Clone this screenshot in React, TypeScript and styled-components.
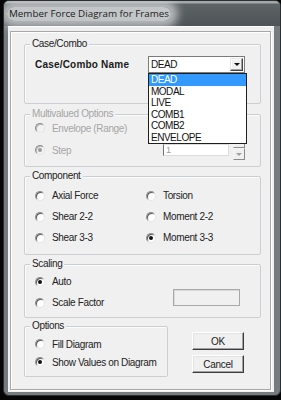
import React from 'react'
import styled, { createGlobalStyle } from 'styled-components'

const GlobalStyle = createGlobalStyle`
  html, body {
    margin: 0;
    padding: 0;
    background: #060606;
    overflow: hidden;
  }
  body {
    width: 281px;
    height: 400px;
    font-family: "Liberation Sans", Arial, sans-serif;
  }
`

const Window = styled.div`
  margin-left: 3px;
  width: 278px;
  height: 396px;
  box-sizing: border-box;
  background: #767b7f;
  border: 1px solid #2c2f32;
  border-radius: 6px;
  display: flex;
  flex-direction: column;
  overflow: hidden;
`

const TitleBar = styled.div`
  height: 25px;
  flex: none;
  display: flex;
  align-items: center;
  padding-left: 3px;
  background: linear-gradient(#a3a8ab 0, #a3a8ab 2px, #5e6366 3px, #4e5357 100%);
`

const TitleText = styled.span`
  font-family: "Open Sans", "Noto Sans", sans-serif;
  font-size: 9.8px;
  line-height: 14px;
  color: #1c1c1c;
  padding: 0 2px;
  background: rgba(206, 209, 211, 0.9);
  border-radius: 10px;
  box-shadow: 0 0 9px 7px rgba(206, 209, 211, 0.8);
`

const Client = styled.div`
  flex: 1;
  margin: 0 6px 3px 4px;
  background: #f0f0f0;
  border-top: 1px solid #ffffff;
  padding: 4px 3px 2px 2px;
  display: flex;
  flex-direction: column;
`

const Panel = styled.div`
  flex: 1;
  border: 1px solid #a7a7a7;
  box-shadow: inset 1px 1px 0 #ffffff, 1px 1px 0 #ffffff;
  padding: 12px 9px 0 13px;
`

const Group = styled.div<{ $h: number; $mt?: number; $w?: number }>`
  box-sizing: border-box;
  height: ${p => p.$h}px;
  width: ${p => (p.$w ? `${p.$w}px` : 'auto')};
  margin-top: ${p => p.$mt ?? 0}px;
  padding: 0 15px 0 10px;
  border: 1px solid #cbcfd2;
  border-radius: 2px;
  box-shadow: inset 1px 1px 0 #fbfbfb;
`

/* sits on the group's top border; $gap is the space below the border to the first row */
const Legend = styled.div<{ $off?: boolean; $gap: number }>`
  width: fit-content;
  margin: -7px 0 ${p => p.$gap - 5}px -5px;
  padding: 0 2px;
  background: #f0f0f0;
  font-size: 10px;
  letter-spacing: -0.35px;
  line-height: 12px;
  color: ${p => (p.$off ? '#a6a6a6' : '#222')};
`

const Text = styled.span<{ $off?: boolean }>`
  font-size: 10px;
  letter-spacing: -0.35px;
  color: ${p => (p.$off ? '#a6a6a6' : '#222')};
  white-space: nowrap;
`

const Radio = styled.span<{ $on?: boolean; $off?: boolean }>`
  position: relative;
  flex: none;
  width: 10px;
  height: 10px;
  box-sizing: border-box;
  border-radius: 50%;
  background: ${p => (p.$off ? '#f2f2f2' : '#ffffff')};
  border: 1px solid;
  border-color: #8f8f8f #e4e4e4 #e4e4e4 #8f8f8f;
  box-shadow: inset 1px 1px 0 ${p => (p.$off ? '#b5b5b5' : '#5a5a5a')};

  &::after {
    content: '';
    display: ${p => (p.$on ? 'block' : 'none')};
    position: absolute;
    left: 2px;
    top: 2px;
    width: 4px;
    height: 4px;
    border-radius: 50%;
    background: ${p => (p.$off ? '#9a9a9a' : '#111')};
  }
`

const Option = styled.div<{ $h: number }>`
  height: ${p => p.$h}px;
  display: flex;
  align-items: center;
  gap: 7px;
`

const NameRow = styled.div`
  display: flex;
  align-items: center;
  height: 17px;
`

const BoldLabel = styled.span`
  width: 114px;
  font-size: 10px;
  font-weight: bold;
  letter-spacing: 0.2px;
  color: #1a1a1a;
  white-space: nowrap;
`

const SelectWrap = styled.div`
  position: relative;
  width: 98px;
  height: 17px;
  box-sizing: border-box;
  background: #ffffff;
  border: 1px solid #7c7c7c;
  display: flex;
  align-items: center;
  padding-left: 2px;
`

const SelectValue = styled.span`
  flex: 1;
  font-size: 10px;
  letter-spacing: -0.4px;
  color: #111;
`

const ArrowButton = styled.span`
  width: 13px;
  height: 13px;
  margin-right: 1px;
  box-sizing: border-box;
  background: #f0f0f0;
  border: 1px solid;
  border-color: #e6e6e6 #404040 #404040 #e6e6e6;
  box-shadow: inset -1px -1px 0 #a0a0a0, inset 1px 1px 0 #ffffff;
  display: flex;
  align-items: center;
  justify-content: center;
`

const Triangle = styled.span<{ $up?: boolean; $c?: string }>`
  width: 0;
  height: 0;
  border-left: 3px solid transparent;
  border-right: 3px solid transparent;
  ${p =>
    p.$up
      ? `border-bottom: 3px solid ${p.$c ?? '#111'};`
      : `border-top: 3px solid ${p.$c ?? '#111'};`}
`

const DropList = styled.ul`
  position: absolute;
  z-index: 10;
  left: -1px;
  top: 16px;
  width: 99px;
  margin: 0;
  padding: 0;
  list-style: none;
  background: #ffffff;
  border: 1px solid #1e1e1e;
  box-sizing: border-box;
`

const DropItem = styled.li<{ $sel?: boolean }>`
  height: 11.5px;
  line-height: 11.5px;
  padding-left: 2px;
  font-size: 10px;
  letter-spacing: -0.45px;
  color: ${p => (p.$sel ? '#ffffff' : '#111')};
  background: ${p => (p.$sel ? '#3399ff' : 'transparent')};
`

const StepRow = styled.div`
  height: 22px;
  display: flex;
  align-items: center;
  gap: 7px;
`

const SpinField = styled.div`
  margin-left: auto;
  display: flex;
  align-items: center;
  gap: 4px;
`

const SpinText = styled.span`
  width: 66px;
  height: 12px;
  box-sizing: border-box;
  border: 1px solid #dcdcdc;
  border-left-color: #707070;
  background: #ffffff;
  font-size: 9px;
  line-height: 10px;
  padding-left: 2px;
  color: #9a9a9a;
`

const SpinButtons = styled.div`
  display: flex;
  flex-direction: column;
  margin-top: -4px;
`

const SpinButton = styled.span`
  width: 12px;
  height: 12px;
  box-sizing: border-box;
  background: #f0f0f0;
  border: 1px solid;
  border-color: #f4f4f4 #8a8a8a #8a8a8a #f4f4f4;
  display: flex;
  align-items: center;
  justify-content: center;
`

const ComponentGrid = styled.div`
  display: grid;
  grid-template-columns: 111px 1fr;
  grid-auto-rows: 21px;
`

const ScalingGrid = styled.div`
  display: grid;
  grid-template-columns: 138px 67px;
  align-items: start;
`

const FieldBox = styled.div`
  margin-top: 18px;
  height: 17px;
  box-sizing: border-box;
  background: #f0f0f0;
  border: 1px solid #a8a8a8;
  box-shadow: inset 1px 1px 0 #dadada;
`

const BottomRow = styled.div`
  display: flex;
  align-items: flex-start;
  margin-top: 8px;
`

const Buttons = styled.div`
  margin: 6px 0 0 24px;
  display: flex;
  flex-direction: column;
  gap: 5px;
`

const Button = styled.button`
  width: 52px;
  height: 18px;
  padding: 0;
  box-sizing: border-box;
  background: #f0f0f0;
  border: 1px solid;
  border-color: #ffffff #3c3c3c #3c3c3c #ffffff;
  box-shadow: inset -1px -1px 0 #a0a0a0, inset 1px 1px 0 #e3e3e3;
  font-family: "Liberation Sans", Arial, sans-serif;
  font-size: 10px;
  letter-spacing: -0.3px;
  color: #1a1a1a;
`

const cases = ['DEAD', 'MODAL', 'LIVE', 'COMB1', 'COMB2', 'ENVELOPE']

const components: [string, boolean][] = [
  ['Axial Force', false],
  ['Torsion', false],
  ['Shear 2-2', false],
  ['Moment 2-2', false],
  ['Shear 3-3', false],
  ['Moment 3-3', true],
]

export default function App() {
  return (
    <>
      <GlobalStyle />
      <Window>
        <TitleBar>
          <TitleText>Member Force Diagram for Frames</TitleText>
        </TitleBar>
        <Client>
          <Panel>
            <Group $h={60}>
              <Legend $gap={11}>Case/Combo</Legend>
              <NameRow>
                <BoldLabel>Case/Combo Name</BoldLabel>
                <SelectWrap>
                  <SelectValue>DEAD</SelectValue>
                  <ArrowButton>
                    <Triangle />
                  </ArrowButton>
                  <DropList>
                    {cases.map((c, i) => (
                      <DropItem key={c} $sel={i === 0}>
                        {c}
                      </DropItem>
                    ))}
                  </DropList>
                </SelectWrap>
              </NameRow>
            </Group>

            <Group $h={53} $mt={10}>
              <Legend $off $gap={2}>Multivalued Options</Legend>
              <Option $h={22}>
                <Radio $off />
                <Text $off>Envelope (Range)</Text>
              </Option>
              <StepRow>
                <Radio $off $on />
                <Text $off>Step</Text>
                <SpinField>
                  <SpinText>1</SpinText>
                  <SpinButtons>
                    <SpinButton>
                      <Triangle $up $c="#a0a0a0" />
                    </SpinButton>
                    <SpinButton>
                      <Triangle $c="#a0a0a0" />
                    </SpinButton>
                  </SpinButtons>
                </SpinField>
              </StepRow>
            </Group>

            <Group $h={79} $mt={9}>
              <Legend $gap={8}>Component</Legend>
              <ComponentGrid>
                {components.map(([label, on]) => (
                  <Option key={label} $h={21}>
                    <Radio $on={on} />
                    <Text>{label}</Text>
                  </Option>
                ))}
              </ComponentGrid>
            </Group>

            <Group $h={54} $mt={9}>
              <Legend $gap={6}>Scaling</Legend>
              <ScalingGrid>
                <div>
                  <Option $h={21}>
                    <Radio $on />
                    <Text>Auto</Text>
                  </Option>
                  <Option $h={21}>
                    <Radio />
                    <Text>Scale Factor</Text>
                  </Option>
                </div>
                <FieldBox />
              </ScalingGrid>
            </Group>

            <BottomRow>
              <Group $h={51} $w={144}>
                <Legend $gap={8}>Options</Legend>
                <Option $h={18}>
                  <Radio />
                  <Text>Fill Diagram</Text>
                </Option>
                <Option $h={18}>
                  <Radio $on />
                  <Text>Show Values on Diagram</Text>
                </Option>
              </Group>
              <Buttons>
                <Button>OK</Button>
                <Button>Cancel</Button>
              </Buttons>
            </BottomRow>
          </Panel>
        </Client>
      </Window>
    </>
  )
}
